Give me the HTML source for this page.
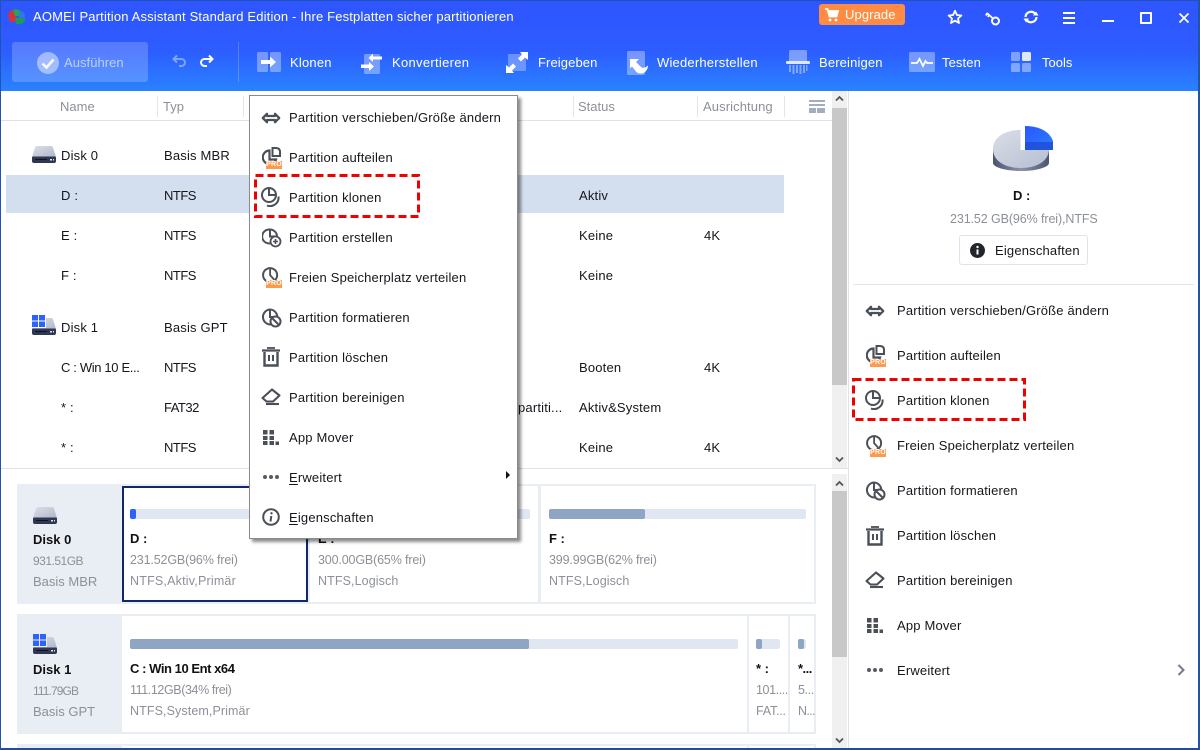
<!DOCTYPE html>
<html lang="de"><head><meta charset="utf-8"><title>AOMEI Partition Assistant</title>
<style>
html,body{margin:0;padding:0;width:1200px;height:750px;overflow:hidden;background:#fff}
body{position:relative;font-family:"Liberation Sans",sans-serif;font-size:13px;color:#16161c}
.a{position:absolute}
.t{position:absolute;white-space:nowrap;line-height:16px;letter-spacing:.18px}
.w{color:#fff}.g{color:#8c9097;letter-spacing:0}.b{font-weight:700;color:#111;letter-spacing:0}
.n{letter-spacing:-.5px}
.c{font-size:12.5px;letter-spacing:-.15px}
svg.a{overflow:visible}
u{text-underline-offset:2px}
.cell{position:absolute;background:#fff}
.bar{position:absolute;height:10px;background:#e1e7f2;border-radius:2px}
.fill{position:absolute;left:0;top:0;height:10px;background:#8fa5c4;border-radius:2px}
.sep{position:absolute;top:96px;width:1px;height:21px;background:#e1e5ee}
.pro{position:absolute;width:16px;height:8px;background:#ff9a4d;color:#fff;font:bold 7px/8px "Liberation Sans",sans-serif;text-align:center;letter-spacing:.2px}
</style></head><body>

<svg width="0" height="0" style="position:absolute"><defs>
<linearGradient id="dg" x1="0" y1="0" x2="1" y2="1"><stop offset="0" stop-color="#dde1ea"/><stop offset="1" stop-color="#aeb6c8"/></linearGradient>
<linearGradient id="pg" x1="0" y1="0" x2="1" y2="1"><stop offset="0" stop-color="#dadee8"/><stop offset="1" stop-color="#b6bed0"/></linearGradient>
<linearGradient id="ps" x1="0" y1="0" x2="1" y2="0"><stop offset="0" stop-color="#4a5470"/><stop offset=".5" stop-color="#8b93aa"/><stop offset="1" stop-color="#4a5470"/></linearGradient>
<linearGradient id="bl" x1="0" y1="0" x2="1" y2="1"><stop offset="0" stop-color="#2b55ff"/><stop offset="1" stop-color="#2a80ff"/></linearGradient>
<symbol id="disk" viewBox="0 0 24 17"><path d="M3 1.500Q3.400 0 5 0h14q1.600 0 2 1.500L24 11H0z" fill="url(#dg)"/><path d="M0 11.500Q0 10.500 1 10.500H23Q24 10.500 24 11.500V15Q24 17 22 17H2Q0 17 0 15z" fill="#2f3850"/><rect x="3" y="13" width="12" height="1" fill="#10131f"/><rect x="18" y="13" width="2" height="1.500" fill="#dfe5f2"/><rect x="21" y="13" width="1" height="1.500" fill="#dfe5f2"/></symbol>
<symbol id="win" viewBox="0 0 13 12"><path d="M0 0h6v5.500H0zM7 0h6v5.500H7zM0 6.500h6V12H0zM7 6.500h6V12H7z" fill="#2d62ff"/></symbol>
<symbol id="move" viewBox="0 0 20 12"><path d="M1.800 6 6 1.800V4h8V1.800L18.200 6 14 10.200V8H6v2.200z" fill="none" stroke="#4b4f57" stroke-width="2.300" stroke-linejoin="round"/></symbol>
<symbol id="split" viewBox="0 0 20 20"><path d="M7.500 3.500A6.800 6.800 0 1 0 14 12.500H7.500z" fill="none" stroke="#4b4f57" stroke-width="2.200"/><path d="M10.500 1H14Q18 1 18 5V9H10.500z" fill="none" stroke="#4b4f57" stroke-width="2"/></symbol>
<symbol id="clone" viewBox="0 0 20 20"><circle cx="8" cy="8" r="7" fill="none" stroke="#4b4f57" stroke-width="2"/><path d="M8 1v7h7" fill="none" stroke="#4b4f57" stroke-width="2"/><path d="M17.500 9.500A8.500 8.500 0 0 1 6 18.500" fill="none" stroke="#4b4f57" stroke-width="2"/></symbol>
<symbol id="create" viewBox="0 0 20 20"><path d="M8 1.500A7 7 0 1 0 8 15.400" fill="none" stroke="#4b4f57" stroke-width="2"/><path d="M8 1.500V8.500H15A7 7 0 0 0 8 1.500z" fill="none" stroke="#4b4f57" stroke-width="2"/><circle cx="13.500" cy="13.500" r="5" fill="#fff" stroke="#4b4f57" stroke-width="1.800"/><path d="M11 13.500h5M13.500 11v5" stroke="#4b4f57" stroke-width="1.600"/></symbol>
<symbol id="free" viewBox="0 0 20 20"><circle cx="9" cy="9" r="7.800" fill="none" stroke="#4b4f57" stroke-width="2.200"/><path d="M9 1.500V9l4.500 5" fill="none" stroke="#4b4f57" stroke-width="2"/></symbol>
<symbol id="format" viewBox="0 0 20 20"><path d="M8 1.500A7.500 7.500 0 1 0 9 16.500" fill="none" stroke="#4b4f57" stroke-width="2"/><path d="M8 1.500V9H15.300A7.500 7.500 0 0 0 8 1.500z" fill="none" stroke="#4b4f57" stroke-width="2"/><circle cx="13.500" cy="13.500" r="5" fill="#fff" stroke="#4b4f57" stroke-width="2"/><path d="M10 10l7 7" stroke="#4b4f57" stroke-width="2"/></symbol>
<symbol id="del" viewBox="0 0 20 20"><path d="M1 3.500h18" stroke="#4b4f57" stroke-width="2.200"/><path d="M6 1h8" stroke="#4b4f57" stroke-width="1.800"/><path d="M3.500 5v13.500h13V5" fill="none" stroke="#4b4f57" stroke-width="2.400"/><path d="M8 8v6M12 8v6" stroke="#4b4f57" stroke-width="2"/></symbol>
<symbol id="wipe" viewBox="0 0 20 20"><path d="M1.500 11 11 2.500l7.500 6-6.500 6H5.500z" fill="none" stroke="#4b4f57" stroke-width="2.100" stroke-linejoin="round"/><path d="M5 17h13" stroke="#4b4f57" stroke-width="2.100"/></symbol>
<symbol id="app" viewBox="0 0 20 20"><path d="M3 3h4.500v4.500H3zM9.500 3H14v4.500H9.500zM3 9h4.500v4H3zM9.500 9H14v4H9.500zM3 14h4.500v4H3zM9.500 14H14v4H9.500zM15.500 14.500h3.500v3.500h-3.500z" fill="#4b4f57"/></symbol>
<symbol id="more" viewBox="0 0 20 6"><circle cx="4" cy="3" r="2" fill="#575b63"/><circle cx="10" cy="3" r="2" fill="#575b63"/><circle cx="16" cy="3" r="2" fill="#575b63"/></symbol>
<symbol id="info" viewBox="0 0 20 20"><circle cx="10" cy="10" r="7.800" fill="none" stroke="#4b4f57" stroke-width="2"/><path d="M10.300 9 9.500 14.500" stroke="#4b4f57" stroke-width="2"/><circle cx="10.500" cy="6.300" r="1.200" fill="#4b4f57"/></symbol>
</defs></svg>

<!-- header -->
<div class="a" style="left:0;top:0;width:1200px;height:91px;background:linear-gradient(180deg,#2f55ff 0%,#2d5cff 55%,#2a82ff 100%)"></div>
<div class="a" style="left:0;top:0;width:1200px;height:1px;background:#1e55b4"></div>
<svg class="a" style="left:8px;top:9px" width="18" height="16" viewBox="0 0 18 16"><path d="M0 6Q1 1 6 1L9 6 7 13 2 13z" fill="#d6323a"/><path d="M5 1Q9-1 13 2L11 7H7z" fill="#27a356"/><path d="M11 2Q17 2 17 8L11 10z" fill="#2d7be0"/><path d="M7 9h10v3Q14 16 8 15z" fill="#1f9a58"/></svg>
<div class="t w" style="left:33px;top:9px;letter-spacing:.16px">AOMEI Partition Assistant Standard Edition - Ihre Festplatten sicher partitionieren</div>

<!-- upgrade -->
<div class="a" style="left:819px;top:4px;width:86px;height:21px;background:#ff8c42;border-radius:3px"></div>
<svg class="a" style="left:824px;top:8px" width="15" height="14" viewBox="0 0 15 14"><path d="M1 1h2.500l2 7.500h7L14 3H4" fill="none" stroke="#fff" stroke-width="1.800"/><path d="M4.500 3.500h9l-1.200 4.500H5.500z" fill="#fff"/><circle cx="6" cy="12" r="1.400" fill="#fff"/><circle cx="12" cy="12" r="1.400" fill="#fff"/></svg>
<div class="t w" style="left:845px;top:7px;letter-spacing:.1px">Upgrade</div>

<!-- window icons -->
<svg class="a" style="left:947px;top:9px" width="16" height="16" viewBox="0 0 16 16"><path d="M8 1.800l1.900 4.200 4.500.5-3.400 3 1 4.500L8 11.700 4 14l1-4.500-3.400-3 4.500-.5z" fill="none" stroke="#fff" stroke-width="1.800" stroke-linejoin="round"/></svg>
<svg class="a" style="left:985px;top:11px" width="16" height="16" viewBox="0 0 16 16"><circle cx="10.500" cy="10" r="3.500" fill="none" stroke="#fff" stroke-width="2"/><path d="M8 7.500 2 2M2 2 1 4.500M4 3.500 3 6" fill="none" stroke="#fff" stroke-width="1.800"/></svg>
<svg class="a" style="left:1023px;top:9px" width="16" height="16" viewBox="0 0 16 16"><path d="M2.500 8A5.500 5.500 0 0 1 12 4.500M13.500 8A5.500 5.500 0 0 1 4 11.500" fill="none" stroke="#fff" stroke-width="2.200"/><path d="M10 6.500h5.500L13 2.500zM6 9.500H.5L3 13.500z" fill="#fff"/></svg>
<div class="a" style="left:1063px;top:12px;width:12px;height:2px;background:#fff;box-shadow:0 5px 0 #fff,0 10px 0 #fff"></div>
<div class="a" style="left:1102px;top:20px;width:12px;height:2px;background:#fff"></div>
<div class="a" style="left:1140px;top:12px;width:8px;height:8px;border:2px solid #fff;border-radius:1px"></div>
<svg class="a" style="left:1178px;top:12px" width="12" height="12" viewBox="0 0 12 12"><path d="M1.500 1.500l9 9M10.500 1.500l-9 9" stroke="#fff" stroke-width="1.800"/></svg>

<!-- toolbar -->
<div class="a" style="left:12px;top:42px;width:136px;height:40px;background:rgba(255,255,255,.2);border-radius:3px"></div>
<svg class="a" style="left:37px;top:52px" width="22" height="22" viewBox="0 0 22 22"><circle cx="11" cy="11" r="11" fill="#fff" fill-opacity=".45"/><path d="M5.500 11.500l4 4 7-8" fill="none" stroke="#fff" stroke-opacity=".9" stroke-width="2.600"/></svg>
<div class="t" style="left:64px;top:55px;color:#fff;opacity:.6;letter-spacing:.05px">Ausführen</div>
<svg class="a" style="left:172px;top:54px" width="16" height="14" viewBox="0 0 16 14"><path d="M5 1.500 1.500 5 5 8.500M2 5h7.500a3.500 3.500 0 0 1 0 7H7" fill="none" stroke="#fff" stroke-opacity=".4" stroke-width="2"/></svg>
<svg class="a" style="left:198px;top:54px" width="16" height="14" viewBox="0 0 16 14"><path d="M11 1.500 14.500 5 11 8.500M14 5H6.500a3.500 3.500 0 0 0 0 7H9" fill="none" stroke="#fff" stroke-width="2"/></svg>
<div class="a" style="left:238px;top:42px;width:1px;height:40px;background:rgba(255,255,255,.2)"></div>

<svg class="a" style="left:257px;top:52px" width="24" height="20" viewBox="0 0 24 20"><rect x="0" width="11" height="20" rx="1.500" fill="#fff" fill-opacity=".35"/><rect x="13" width="11" height="20" rx="1.500" fill="#fff" fill-opacity=".35"/><path d="M4 8h9V4.500L19 10l-6 5.500V12H4z" fill="#fff"/></svg>
<div class="t w" style="left:290px;top:55px;letter-spacing:.2px">Klonen</div>
<svg class="a" style="left:361px;top:51px" width="21" height="24" viewBox="0 0 21 24"><rect x="3" y="3" width="16" height="20" rx="1.500" fill="#fff" fill-opacity=".35"/><path d="M21 6.500H12V3.500L7.500 8 12 12V9.500H21zM0 14.500H8V12l5 4.500L8 21v-3H0z" fill="#fff" transform="translate(0 -1)"/></svg>
<div class="t w" style="left:392px;top:55px;letter-spacing:.3px">Konvertieren</div>
<svg class="a" style="left:506px;top:52px" width="22" height="21" viewBox="0 0 22 21"><rect x="2" y="2" width="18" height="17" rx="1" fill="#fff" fill-opacity=".3"/><path d="M14 0h8v8l-3-2.500-4 4-3-3 4-4zM8 21H0v-8l3 2.500 4-4 3 3-4 4z" fill="#fff"/></svg>
<div class="t w" style="left:538px;top:55px;letter-spacing:.1px">Freigeben</div>
<svg class="a" style="left:627px;top:51px" width="21" height="24" viewBox="0 0 21 24"><rect width="18" height="24" rx="1.500" fill="#fff" fill-opacity=".35"/><path d="M3 8h9l-3 3 5 5c2 1.500 4 1 7-1.500 0 4-3 8-7 8-3 0-4-1-5-2l-4-5-2 2z" fill="#fff"/></svg>
<div class="t w" style="left:657px;top:55px;letter-spacing:.2px">Wiederherstellen</div>
<svg class="a" style="left:786px;top:50px" width="24" height="24" viewBox="0 0 24 24"><path d="M3 1.500Q3 0 4.500 0h15Q21 0 21 1.500V11H3z" fill="#fff" fill-opacity=".38"/><rect y="11" width="24" height="3" rx="1" fill="#fff" fill-opacity=".85"/><path d="M3 15h2v7H3zM6.500 15h2v9h-2zM10 15h2v8h-2zM13.500 15h2v9h-2zM17 15h2v8h-2zM20 15h1.500v6H20z" fill="#fff" fill-opacity=".4"/></svg>
<div class="t w" style="left:819px;top:55px;letter-spacing:.15px">Bereinigen</div>
<svg class="a" style="left:909px;top:52px" width="26" height="20" viewBox="0 0 26 20"><rect width="26" height="20" rx="1.500" fill="#fff" fill-opacity=".35"/><path d="M2 11h6l2.500-4 3.500 7 2.500-5 1.500 2h6" fill="none" stroke="#fff" stroke-width="1.800"/></svg>
<div class="t w" style="left:942px;top:55px;letter-spacing:.1px">Testen</div>
<svg class="a" style="left:1011px;top:52px" width="20" height="20" viewBox="0 0 20 20"><rect width="9" height="9" rx="1.500" fill="#fff" fill-opacity=".4"/><rect x="11" width="9" height="9" rx="1.500" fill="#fff" fill-opacity=".85"/><rect y="11" width="9" height="9" rx="1.500" fill="#fff" fill-opacity=".4"/><rect x="11" y="11" width="9" height="9" rx="1.500" fill="#fff" fill-opacity=".4"/></svg>
<div class="t w" style="left:1042px;top:55px;letter-spacing:0">Tools</div>

<!-- table head -->
<div class="a" style="left:1px;top:120px;width:831px;height:1px;background:#dde2ec"></div>
<div class="sep" style="left:157px"></div><div class="sep" style="left:243px"></div><div class="sep" style="left:573px"></div><div class="sep" style="left:697px"></div><div class="sep" style="left:784px"></div>
<div class="t g" style="left:60px;top:99px">Name</div>
<div class="t g" style="left:163px;top:99px">Typ</div>
<div class="t g" style="left:578px;top:99px">Status</div>
<div class="t g" style="left:703px;top:99px;letter-spacing:.1px">Ausrichtung</div>
<div class="a" style="left:809px;top:100px;width:16px;height:2px;background:#a4adbd;box-shadow:0 4px 0 #a4adbd"></div>
<div class="a" style="left:809px;top:108px;width:7px;height:5px;background:#a4adbd"></div>
<div class="a" style="left:817px;top:108px;width:8px;height:5px;background:#a4adbd"></div>

<!-- rows -->
<div class="a" style="left:6px;top:175px;width:778px;height:38px;background:#d3dfee"></div>
<svg class="a" style="left:32px;top:146px" width="24" height="17"><use href="#disk"/></svg>
<div class="t" style="left:61px;top:148px">Disk 0</div><div class="t" style="left:164px;top:148px">Basis MBR</div>
<div class="t" style="left:61px;top:188px">D :</div><div class="t n" style="left:164px;top:188px">NTFS</div><div class="t" style="left:579px;top:188px">Aktiv</div>
<div class="t" style="left:61px;top:228px">E :</div><div class="t n" style="left:164px;top:228px">NTFS</div><div class="t" style="left:579px;top:228px">Keine</div><div class="t" style="left:704px;top:228px">4K</div>
<div class="t" style="left:61px;top:268px">F :</div><div class="t n" style="left:164px;top:268px">NTFS</div><div class="t" style="left:579px;top:268px">Keine</div>
<svg class="a" style="left:32px;top:318px" width="24" height="17"><use href="#disk"/></svg>
<div class="a" style="left:31px;top:314px;width:15px;height:14px;background:#fff"></div>
<svg class="a" style="left:32px;top:315px" width="13" height="12"><use href="#win"/></svg>
<div class="t" style="left:61px;top:320px">Disk 1</div><div class="t" style="left:164px;top:320px">Basis GPT</div>
<div class="t" style="left:61px;top:360px;letter-spacing:-.35px">C : Win 10 E...</div><div class="t n" style="left:164px;top:360px">NTFS</div><div class="t" style="left:579px;top:360px">Booten</div><div class="t" style="left:704px;top:360px">4K</div>
<div class="t" style="left:61px;top:400px">* :</div><div class="t n" style="left:164px;top:400px">FAT32</div><div class="t" style="left:518px;top:400px">partiti...</div><div class="t" style="left:579px;top:400px">Aktiv&amp;System</div>
<div class="t" style="left:61px;top:440px">* :</div><div class="t n" style="left:164px;top:440px">NTFS</div><div class="t" style="left:579px;top:440px">Keine</div><div class="t" style="left:704px;top:440px">4K</div>

<!-- top scrollbar -->
<div class="a" style="left:832px;top:91px;width:15px;height:377px;background:#f0f0f0"></div>
<div class="a" style="left:832px;top:108px;width:15px;height:277px;background:#c8c8c8"></div>
<svg class="a" style="left:835px;top:95px" width="9" height="7" viewBox="0 0 9 7"><path d="M1 5.500 4.500 2 8 5.500" fill="none" stroke="#555" stroke-width="1.800"/></svg>
<svg class="a" style="left:835px;top:456px" width="9" height="7" viewBox="0 0 9 7"><path d="M1 1.500 4.500 5 8 1.500" fill="none" stroke="#555" stroke-width="1.800"/></svg>
<div class="a" style="left:1px;top:468px;width:847px;height:1px;background:#dde2ec"></div>

<!-- disk area -->
<div class="a" style="left:17px;top:484px;width:799px;height:120px;background:#e9edf4"></div>
<div class="a" style="left:17px;top:614px;width:799px;height:120px;background:#e9edf4"></div>
<div class="a" style="left:17px;top:744px;width:799px;height:6px;background:#e9edf4"></div>

<div class="cell" style="left:122px;top:486px;width:182px;height:112px;border:2px solid #10286a"></div>
<div class="cell" style="left:310px;top:486px;width:228px;height:116px"></div>
<div class="cell" style="left:541px;top:486px;width:273px;height:116px"></div>
<div class="cell" style="left:122px;top:616px;width:625px;height:116px"></div>
<div class="cell" style="left:749px;top:616px;width:39px;height:116px"></div>
<div class="cell" style="left:790px;top:616px;width:24px;height:116px"></div>
<div class="cell" style="left:122px;top:746px;width:625px;height:4px"></div>
<div class="cell" style="left:749px;top:746px;width:65px;height:4px"></div>

<svg class="a" style="left:33px;top:507px" width="24" height="17"><use href="#disk"/></svg>
<div class="t b" style="left:33px;top:532px">Disk 0</div>
<div class="t g" style="left:33px;top:553px;font-size:12px;letter-spacing:-.5px">931.51GB</div>
<div class="t g" style="left:33px;top:574px">Basis MBR</div>
<svg class="a" style="left:33px;top:637px" width="24" height="17"><use href="#disk"/></svg>
<div class="a" style="left:32px;top:632px;width:15px;height:15px;background:#e9edf4"></div>
<svg class="a" style="left:33px;top:634px" width="13" height="12"><use href="#win"/></svg>
<div class="t b" style="left:33px;top:662px">Disk 1</div>
<div class="t g" style="left:33px;top:683px;font-size:12px;letter-spacing:-.9px">111.79GB</div>
<div class="t g" style="left:33px;top:704px">Basis GPT</div>

<div class="bar" style="left:130px;top:509px;width:170px"><div class="fill" style="width:6px;background:#2d62ff"></div></div>
<div class="t b" style="left:130px;top:531px">D :</div>
<div class="t g c" style="left:130px;top:552px">231.52GB(96% frei)</div>
<div class="t g" style="left:130px;top:573px;font-size:12.5px;letter-spacing:.2px">NTFS,Aktiv,Primär</div>

<div class="bar" style="left:318px;top:509px;width:212px"></div>
<div class="t b" style="left:318px;top:531px">E :</div>
<div class="t g c" style="left:318px;top:552px">300.00GB(65% frei)</div>
<div class="t g" style="left:318px;top:573px;font-size:12.5px;letter-spacing:.1px">NTFS,Logisch</div>

<div class="bar" style="left:549px;top:509px;width:257px"><div class="fill" style="width:96px"></div></div>
<div class="t b" style="left:549px;top:531px">F :</div>
<div class="t g c" style="left:549px;top:552px">399.99GB(62% frei)</div>
<div class="t g" style="left:549px;top:573px;font-size:12.5px;letter-spacing:.1px">NTFS,Logisch</div>

<div class="bar" style="left:130px;top:639px;width:608px"><div class="fill" style="width:399px"></div></div>
<div class="t b" style="left:130px;top:661px;letter-spacing:-.45px">C : Win 10 Ent x64</div>
<div class="t g" style="left:130px;top:682px;font-size:12.5px;letter-spacing:-.4px">111.12GB(34% frei)</div>
<div class="t g" style="left:130px;top:703px;font-size:12.5px;letter-spacing:.1px">NTFS,System,Primär</div>

<div class="bar" style="left:756px;top:639px;width:24px"><div class="fill" style="width:6px"></div></div>
<div class="t b" style="left:756px;top:661px">* :</div>
<div class="t g" style="left:756px;top:682px;font-size:12.5px;letter-spacing:-.4px">101....</div>
<div class="t g" style="left:756px;top:703px;font-size:12.5px;letter-spacing:-.2px">FAT...</div>
<div class="bar" style="left:798px;top:639px;width:8px"><div class="fill" style="width:6px"></div></div>
<div class="t b" style="left:798px;top:661px;letter-spacing:-.5px">*...</div>
<div class="t g" style="left:798px;top:682px;font-size:12.5px;letter-spacing:-.4px">5...</div>
<div class="t g" style="left:798px;top:703px;font-size:12.5px;letter-spacing:-.6px">N...</div>

<!-- bottom scrollbar -->
<div class="a" style="left:832px;top:474px;width:15px;height:276px;background:#f0f0f0"></div>
<div class="a" style="left:832px;top:491px;width:15px;height:166px;background:#c8c8c8"></div>
<svg class="a" style="left:835px;top:480px" width="9" height="7" viewBox="0 0 9 7"><path d="M1 5.500 4.500 2 8 5.500" fill="none" stroke="#555" stroke-width="1.800"/></svg>
<svg class="a" style="left:835px;top:737px" width="9" height="7" viewBox="0 0 9 7"><path d="M1 1.500 4.500 5 8 1.500" fill="none" stroke="#555" stroke-width="1.800"/></svg>

<!-- right panel -->
<div class="a" style="left:848px;top:91px;width:1px;height:659px;background:#dfe3ec"></div>
<svg class="a" style="left:990px;top:122px" width="66" height="52" viewBox="0 0 66 52"><path d="M3 27v14c0 4 12 8 28 8s28-4 28-8V27z" fill="url(#ps)"/><path d="M31 8C15 8 3 15 3 27s12 19 28 19 28-7 28-19c0-3-1-5-2-7H31z" fill="url(#pg)"/><path d="M30.500 6h4.500v22H30.500z" fill="#fff"/><path d="M35 4c12 0 24 4 28 15v9H35z" fill="url(#bl)"/><path d="M35 20h28v8H35z" fill="#1f4ad0" opacity=".75"/></svg>
<div class="t b" style="left:1013px;top:188px">D :</div>
<div class="t g" style="left:950px;top:211px;font-size:12.5px;letter-spacing:-.1px">231.52 GB(96% frei),NTFS</div>
<div class="a" style="left:959px;top:235px;width:127px;height:28px;border:1px solid #dfe3ec;border-radius:3px;background:#fff"></div>
<svg class="a" style="left:970px;top:243px" width="15" height="15" viewBox="0 0 15 15"><circle cx="7.500" cy="7.500" r="7.500" fill="#22252c"/><path d="M7.500 6.500v5" stroke="#fff" stroke-width="2"/><circle cx="7.500" cy="4" r="1.200" fill="#fff"/></svg>
<div class="t" style="left:995px;top:243px">Eigenschaften</div>
<div class="a" style="left:853px;top:284px;width:341px;height:1px;background:#e1e5ee"></div>

<svg class="a" style="left:865px;top:305px" width="20" height="12"><use href="#move"/></svg>
<div class="t" style="left:897px;top:303px">Partition verschieben/Größe ändern</div>
<svg class="a" style="left:866px;top:345px" width="20" height="20"><use href="#split"/></svg>
<div class="pro" style="left:870px;top:359px">PRO</div>
<div class="t" style="left:897px;top:348px">Partition aufteilen</div>
<svg class="a" style="left:865px;top:390px" width="20" height="20"><use href="#clone"/></svg>
<div class="t" style="left:897px;top:393px">Partition klonen</div>
<svg class="a" style="left:866px;top:435px" width="18" height="18"><use href="#free"/></svg>
<div class="pro" style="left:870px;top:449px">PRO</div>
<div class="t" style="left:897px;top:438px">Freien Speicherplatz verteilen</div>
<svg class="a" style="left:866px;top:481px" width="20" height="20"><use href="#format"/></svg>
<div class="t" style="left:897px;top:483px">Partition formatieren</div>
<svg class="a" style="left:865px;top:526px" width="20" height="20"><use href="#del"/></svg>
<div class="t" style="left:897px;top:528px">Partition löschen</div>
<svg class="a" style="left:865px;top:570px" width="20" height="20"><use href="#wipe"/></svg>
<div class="t" style="left:897px;top:573px">Partition bereinigen</div>
<svg class="a" style="left:864px;top:615px" width="20" height="20"><use href="#app"/></svg>
<div class="t" style="left:897px;top:618px">App Mover</div>
<svg class="a" style="left:865px;top:667px" width="20" height="6"><use href="#more"/></svg>
<div class="t" style="left:897px;top:663px">Erweitert</div>
<svg class="a" style="left:1177px;top:664px" width="8" height="12" viewBox="0 0 8 12"><path d="M1.500 1 6.500 6 1.500 11" fill="none" stroke="#747a86" stroke-width="2"/></svg>
<svg class="a" style="left:852px;top:378px" width="175" height="44"><rect x="1.500" y="1.500" width="171" height="40" fill="none" stroke="#f00000" stroke-width="3" stroke-dasharray="8 4"/></svg>

<!-- context menu -->
<div class="a" style="left:249px;top:95px;width:267px;height:442px;background:#fff;border:1px solid #8a8a8a;box-shadow:3px 3px 3px rgba(0,0,0,.45)"></div>
<svg class="a" style="left:261px;top:112px" width="20" height="12"><use href="#move"/></svg>
<div class="t" style="left:289px;top:110px">Partition verschieben/Größe ändern</div>
<svg class="a" style="left:262px;top:147px" width="20" height="20"><use href="#split"/></svg>
<div class="pro" style="left:266px;top:161px">PRO</div>
<div class="t" style="left:289px;top:150px">Partition aufteilen</div>
<svg class="a" style="left:261px;top:187px" width="20" height="20"><use href="#clone"/></svg>
<div class="t" style="left:289px;top:190px">Partition klonen</div>
<svg class="a" style="left:262px;top:228px" width="20" height="20"><use href="#create"/></svg>
<div class="t" style="left:289px;top:230px">Partition erstellen</div>
<svg class="a" style="left:262px;top:267px" width="18" height="18"><use href="#free"/></svg>
<div class="pro" style="left:266px;top:280px">PRO</div>
<div class="t" style="left:289px;top:270px">Freien Speicherplatz verteilen</div>
<svg class="a" style="left:262px;top:308px" width="20" height="20"><use href="#format"/></svg>
<div class="t" style="left:289px;top:310px">Partition formatieren</div>
<svg class="a" style="left:261px;top:347px" width="20" height="20"><use href="#del"/></svg>
<div class="t" style="left:289px;top:350px">Partition löschen</div>
<svg class="a" style="left:261px;top:387px" width="20" height="20"><use href="#wipe"/></svg>
<div class="t" style="left:289px;top:390px">Partition bereinigen</div>
<svg class="a" style="left:260px;top:427px" width="20" height="20"><use href="#app"/></svg>
<div class="t" style="left:289px;top:430px">App Mover</div>
<svg class="a" style="left:261px;top:474px" width="20" height="6"><use href="#more"/></svg>
<div class="t" style="left:289px;top:470px"><u>E</u>rweitert</div>
<svg class="a" style="left:505px;top:471px" width="6" height="8" viewBox="0 0 6 8"><path d="M1 0 5 4 1 8z" fill="#111"/></svg>
<svg class="a" style="left:261px;top:507px" width="20" height="20"><use href="#info"/></svg>
<div class="t" style="left:289px;top:510px"><u>E</u>igenschaften</div>
<svg class="a" style="left:254px;top:174px" width="167" height="45"><rect x="1.500" y="1.500" width="163" height="41" fill="none" stroke="#f00000" stroke-width="3" stroke-dasharray="8 4"/></svg>

<!-- window border -->
<div class="a" style="left:0;top:0;width:1px;height:750px;background:#1e55b4"></div>
<div class="a" style="left:1198px;top:0;width:2px;height:750px;background:#1e55a8"></div>
<div class="a" style="left:0;top:748px;width:1200px;height:2px;background:#1e4f9c"></div>
</body></html>
